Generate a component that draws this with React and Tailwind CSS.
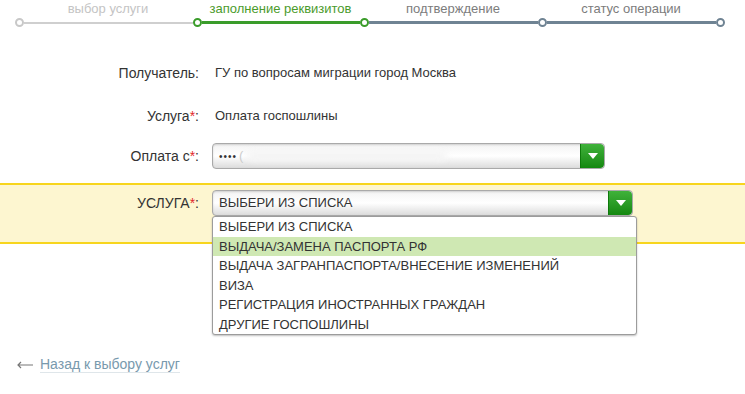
const steps = [
  { label: "выбор услуги", text: "text-[#c4c4c4]", line: "h-[2px] bg-[#cfcfcf]", lw: "w-[178px]", sw: "w-[169px]" },
  { label: "заполнение реквизитов", text: "text-[#4b9b2c]", line: "h-[3px] bg-[#3a9c2a]", lw: "w-[167px]", sw: "w-[158px]" },
  { label: "подтверждение", text: "text-[#7c7c7c]", line: "h-[3px] bg-[#6f8393]", lw: "w-[178px]", sw: "w-[169px]" },
  { label: "статус операции", text: "text-[#7c7c7c]", line: "h-[3px] bg-[#6f8393]", lw: "w-[178px]", sw: "w-[169px]" },
];

const dots = [
  "border-[#c8c8c8]",
  "border-[#3a9c2a]",
  "border-[#3a9c2a]",
  "border-[#6f8393]",
  "border-[#6f8393]",
];

const options = [
  "ВЫБЕРИ ИЗ СПИСКА",
  "ВЫДАЧА/ЗАМЕНА ПАСПОРТА РФ",
  "ВЫДАЧА ЗАГРАНПАСПОРТА/ВНЕСЕНИЕ ИЗМЕНЕНИЙ",
  "ВИЗА",
  "РЕГИСТРАЦИЯ ИНОСТРАННЫХ ГРАЖДАН",
  "ДРУГИЕ ГОСПОШЛИНЫ",
];

function Dot({ color }) {
  return <div className={`w-[9px] h-[9px] rounded-full border-2 bg-white shrink-0 ${color}`}></div>;
}

function Arrow() {
  return (
    <div className="w-[24px] shrink-0 self-stretch bg-gradient-to-b from-[#3fb23a] to-[#13880f] border-l border-[#0f7a0c] rounded-r-[4px] flex items-center justify-center">
      <svg width="10" height="7" viewBox="0 0 10 7">
        <path d="M0 0 L10 0 L5 6 Z" fill="#fff" />
      </svg>
    </div>
  );
}

function Select({ width, children }) {
  return (
    <div className={`${width} h-[26px] flex rounded-[4px] border border-[#a9a9a9] overflow-hidden bg-gradient-to-b from-[#f3f3f3] via-white to-[#dcdcdc] shadow-[inset_0_1px_2px_rgba(0,0,0,0.15)]`}>
      <div className="flex-1 flex items-center px-[6px] text-[13px] text-[#333] min-w-0">{children}</div>
      <Arrow />
    </div>
  );
}

function Label({ children, req }) {
  return (
    <div className="w-[200px] shrink-0 text-right text-[14px] text-[#333] pr-[1px]">
      {children}
      {req && <span className="text-[#e3262b]">*</span>}:
    </div>
  );
}

export default function App() {
  return (
    <div className="w-[745px] h-[394px] bg-white overflow-hidden font-['Liberation_Sans',Arial,sans-serif]">
      {/* Stepper */}
      <div className="pl-[15px]">
        <div className="flex h-[17px] items-center pl-[4px]">
          {steps.map((s, i) => (
            <div key={i} className={`${s.lw} shrink-0 text-center text-[13px] leading-none ${s.text}`}>
              {s.label}
            </div>
          ))}
        </div>
        <div className="flex items-center mt-[1px]">
          {steps.map((s, i) => (
            <div key={i} className="flex items-center">
              <Dot color={dots[i]} />
              <div className={`${s.sw} ${s.line}`}></div>
            </div>
          ))}
          <Dot color={dots[4]} />
        </div>
      </div>

      {/* Form rows */}
      <div className="mt-[36px] flex flex-col">
        <div className="flex items-center gap-[15px] h-[20px]">
          <Label>Получатель</Label>
          <div className="text-[13px] text-[#333]">ГУ по вопросам миграции город Москва</div>
        </div>
        <div className="flex items-center gap-[15px] h-[20px] mt-[23px]">
          <Label req>Услуга</Label>
          <div className="text-[13px] text-[#333]">Оплата госпошлины</div>
        </div>
        <div className="flex items-center gap-[12px] mt-[17px]">
          <Label req>Оплата с</Label>
          <Select width="w-[393px]">
            <span className="tracking-[1px] text-[#333] text-[10px]">••••</span>
            <span className="ml-[2px] text-[#ccc]">(</span>
            <div className="ml-[4px] h-[10px] w-[200px] rounded-full bg-[#f4f4f4] blur-[3px]"></div>
          </Select>
        </div>
      </div>

      {/* Highlighted row */}
      <div className="mt-[14px] border-y-2 border-[#f7d51d] bg-[#fdf6d0] h-[61px]">
        <div className="flex items-start gap-[12px] pt-[5px]">
          <div className="w-[200px] shrink-0 text-right text-[14px] text-[#333] pt-[3px] pr-[1px]">
            УСЛУГА<span className="text-[#e3262b]">*</span>:
          </div>
          <div className="relative">
            <Select width="w-[421px]">
              <span>ВЫБЕРИ ИЗ СПИСКА</span>
            </Select>
            <div className="absolute left-0 top-[26px] w-[425px] bg-white border border-[#9c9c9c] rounded-[3px] shadow-[0_1px_2px_rgba(0,0,0,0.25)] z-10">
              {options.map((o, i) => (
                <div
                  key={i}
                  className={`h-[19.5px] flex items-center px-[6px] text-[13px] text-[#333] ${i === 1 ? "bg-[#cfe8b3]" : ""}`}
                >
                  {o}
                </div>
              ))}
            </div>
          </div>
        </div>
      </div>

      {/* Back link */}
      <div className="mt-[112px] pl-[17px] flex items-center gap-[7px]">
        <svg width="16" height="8" viewBox="0 0 16 8" className="shrink-0">
          <path d="M16 4 H1 M4 1 L1 4 L4 7" stroke="#777" strokeWidth="1.2" fill="none" />
        </svg>
        <span className="text-[14px] text-[#7899ad] border-b border-[#dfe6ea] leading-[16px]">
          Назад к выбору услуг
        </span>
      </div>
    </div>
  );
}
